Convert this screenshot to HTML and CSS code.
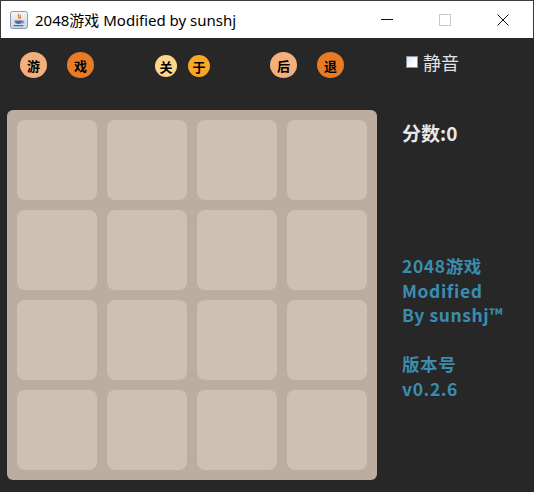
FILE: index.html
```html
<!DOCTYPE html>
<html>
<head>
<meta charset="utf-8">
<link rel="stylesheet" href="styles.css">
</head>
<body>
<div class="window">
  <div class="titlebar">
    <svg class="app-icon" width="18" height="18" viewBox="0 0 18 18">
      <defs>
        <linearGradient id="ig" x1="0" y1="0" x2="0" y2="1">
          <stop offset="0" stop-color="#f4f7fb"/>
          <stop offset="1" stop-color="#c9d4e2"/>
        </linearGradient>
      </defs>
      <rect x="0.5" y="0.5" width="17" height="17" rx="2" fill="url(#ig)" stroke="#8a9ab0"/>
      <path d="M9 3 C7 5 10 6 8.5 8 M10.5 4 C9.5 5.5 11.5 6 10 7.5" stroke="#e2742a" stroke-width="1.2" fill="none"/>
      <path d="M4.5 9.5 H12.5 C12.5 12 11 13 8.5 13 C6 13 4.5 12 4.5 9.5 Z" fill="#4a6fa5"/>
      <path d="M12.5 10 C14.5 10 14.5 12 12 12" stroke="#4a6fa5" stroke-width="1" fill="none"/>
      <rect x="3.5" y="14" width="10" height="1.3" rx="0.6" fill="#4a6fa5"/>
    </svg>
    <span class="title">2048游戏 Modified by sunshj</span>
    <div class="controls">
      <span class="ctl min"></span>
      <span class="ctl max"></span>
      <span class="ctl close">
        <svg width="12" height="12" viewBox="0 0 12 12"><path d="M0.5 0.5 L11.5 11.5 M11.5 0.5 L0.5 11.5" stroke="#111" stroke-width="1"/></svg>
      </span>
    </div>
  </div>
  <div class="toolbar">
    <div class="group g1">
      <span class="btn big c8">游</span>
      <span class="btn big c16">戏</span>
    </div>
    <div class="group g2">
      <span class="btn small cy">关</span>
      <span class="btn small co">于</span>
    </div>
    <div class="group g3">
      <span class="btn big c8">后</span>
      <span class="btn big c16">退</span>
    </div>
    <label class="mute"><span class="box"></span>静音</label>
  </div>
  <div class="main">
    <div class="board">
      <div class="tile"></div><div class="tile"></div><div class="tile"></div><div class="tile"></div>
      <div class="tile"></div><div class="tile"></div><div class="tile"></div><div class="tile"></div>
      <div class="tile"></div><div class="tile"></div><div class="tile"></div><div class="tile"></div>
      <div class="tile"></div><div class="tile"></div><div class="tile"></div><div class="tile"></div>
    </div>
    <div class="side">
      <div class="score">分数:0</div>
      <div class="info">2048游戏<br>Modified<br>By sunshj™<br><br>版本号<br>v0.2.6</div>
    </div>
  </div>
</div>
</body>
</html>
```
FILE: styles.css
```css
html, body {
  margin: 0;
  padding: 0;
  background: #272727;
}
.window {
  width: 534px;
  height: 492px;
  box-sizing: border-box;
  background: #272727;
  overflow: hidden;
}
.titlebar {
  height: 38px;
  box-sizing: border-box;
  background: #ffffff;
  border: 1px solid #3a3a3a;
  border-bottom: none;
  display: flex;
  align-items: center;
  padding-left: 9px;
}
.app-icon {
  flex: none;
  margin-top: 1px;
}
.title {
  margin-left: 7px;
  font-family: "Noto Sans", "Noto Sans CJK SC", sans-serif;
  font-size: 15px;
  color: #000;
  white-space: nowrap;
}
.controls {
  margin-left: auto;
  display: flex;
  align-items: center;
  height: 100%;
}
.ctl {
  display: flex;
  align-items: center;
  justify-content: center;
}
.min {
  width: 12px;
  height: 1px;
  background: #111;
  margin-right: 46px;
}
.max {
  width: 10px;
  height: 10px;
  border: 1px solid #c8c8c8;
  margin-right: 46px;
}
.close {
  width: 12px;
  height: 12px;
  margin-right: 24px;
}
.toolbar {
  height: 54px;
  display: flex;
  align-items: center;
  font-family: "Noto Sans CJK SC", sans-serif;
}
.group {
  display: flex;
  align-items: center;
}
.g1 { margin-left: 20px; gap: 20px; }
.g2 { margin-left: 61px; gap: 11px; margin-top: 2px; }
.g3 { margin-left: 60px; gap: 20px; }
.btn {
  display: flex;
  align-items: center;
  justify-content: center;
  border-radius: 50%;
  color: #000;
  font-weight: 700;
}
.big {
  width: 27px;
  height: 26px;
  font-size: 13px;
}
.small {
  width: 22px;
  height: 22px;
  font-size: 13px;
}
.c8 { background: #f4b07c; }
.c16 { background: #e77b26; }
.cy { background: #fdd58b; }
.co { background: #f9a724; }
.mute {
  margin-left: 62px;
  display: flex;
  align-items: center;
  color: #e2e2e2;
  font-size: 18px;
  font-family: "Noto Sans CJK SC", sans-serif;
  margin-top: -7px;
}
.box {
  width: 10px;
  height: 10px;
  border: 1px solid #8494a8;
  background: linear-gradient(135deg, #dde6f1, #ffffff 70%);
  margin-right: 5px;
  margin-top: 1px;
}
.main {
  display: flex;
  padding-top: 18px;
}
.board {
  margin-left: 7px;
  width: 370px;
  height: 370px;
  box-sizing: border-box;
  padding: 10px;
  background: #bbada0;
  border-radius: 6px;
  display: grid;
  grid-template-columns: repeat(4, 80px);
  grid-template-rows: repeat(4, 80px);
  gap: 10px;
}
.tile {
  background: #cdc1b4;
  border-radius: 8px;
}
.side {
  margin-left: 25px;
  font-family: "Noto Sans CJK SC", sans-serif;
  font-weight: 700;
}
.score {
  color: #e8e8e8;
  font-size: 19px;
  line-height: 26px;
  margin-top: 10px;
}
.info {
  color: #3a8db0;
  font-size: 17.5px;
  letter-spacing: 0.6px;
  line-height: 24.5px;
  margin-top: 108px;
}
```
